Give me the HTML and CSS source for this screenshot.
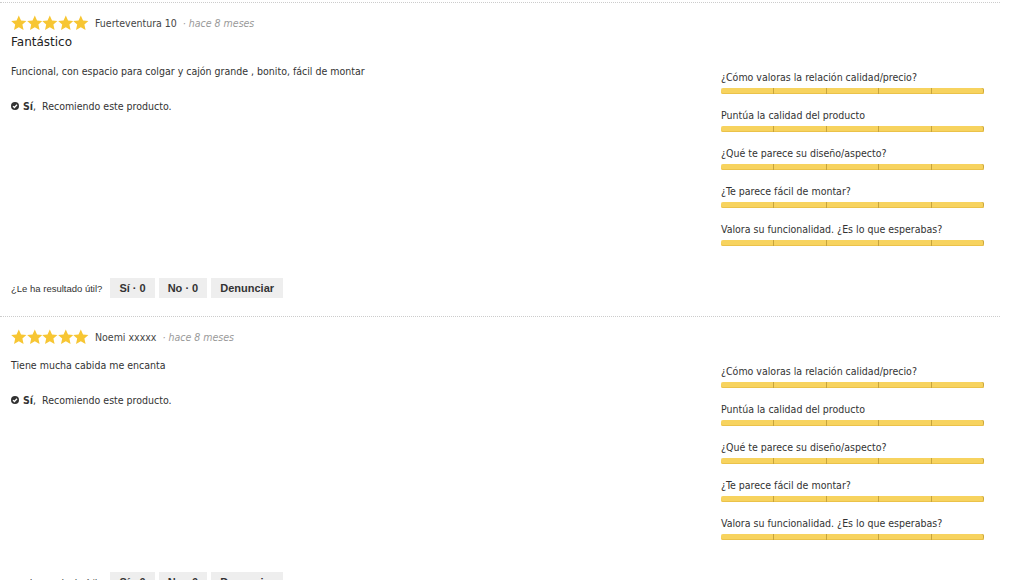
FILE: index.html
```html
<!DOCTYPE html>
<html lang="es">
  <head>
    <meta charset="utf-8" />
    <meta name="viewport" content="width=device-width, initial-scale=1" />
    <title>Opiniones del producto</title>
    <link rel="stylesheet" href="styles.css">
  </head>
  <body>
    <div class="reviews">
      <!-- review 1 -->
      <article class="review">
        <div class="review-head">
          <span class="stars" aria-label="5 estrellas">
            <svg viewBox="0 0 16 16"><polygon points="8,0.4 10.3,5.4 15.8,5.9 11.7,9.6 12.9,15.2 8,12.3 3.1,15.2 4.3,9.6 0.2,5.9 5.7,5.4"/></svg>
            <svg viewBox="0 0 16 16"><polygon points="8,0.4 10.3,5.4 15.8,5.9 11.7,9.6 12.9,15.2 8,12.3 3.1,15.2 4.3,9.6 0.2,5.9 5.7,5.4"/></svg>
            <svg viewBox="0 0 16 16"><polygon points="8,0.4 10.3,5.4 15.8,5.9 11.7,9.6 12.9,15.2 8,12.3 3.1,15.2 4.3,9.6 0.2,5.9 5.7,5.4"/></svg>
            <svg viewBox="0 0 16 16"><polygon points="8,0.4 10.3,5.4 15.8,5.9 11.7,9.6 12.9,15.2 8,12.3 3.1,15.2 4.3,9.6 0.2,5.9 5.7,5.4"/></svg>
            <svg viewBox="0 0 16 16"><polygon points="8,0.4 10.3,5.4 15.8,5.9 11.7,9.6 12.9,15.2 8,12.3 3.1,15.2 4.3,9.6 0.2,5.9 5.7,5.4"/></svg>
          </span>
          <span class="author">Fuerteventura 10</span>
          <span class="date">· hace 8 meses</span>
        </div>
        <h3 class="review-title">Fantástico</h3>

        <div class="review-body">
          <div class="review-text">
            <p>Funcional, con espacio para colgar y cajón grande , bonito, fácil de montar</p>
            <p class="recommend">
              <svg class="check" viewBox="0 0 8 8"><circle cx="4" cy="4" r="4"/><path d="M2 4.1 L3.4 5.5 L6 2.7"/></svg>
              <b>Sí</b>,&nbsp; Recomiendo este producto.
            </p>
          </div>

          <ul class="ratings">
            <li><span>¿Cómo valoras la relación calidad/precio?</span><div class="bar"><i></i><i></i><i></i><i></i><i></i></div></li>
            <li><span>Puntúa la calidad del producto</span><div class="bar"><i></i><i></i><i></i><i></i><i></i></div></li>
            <li><span>¿Qué te parece su diseño/aspecto?</span><div class="bar"><i></i><i></i><i></i><i></i><i></i></div></li>
            <li><span>¿Te parece fácil de montar?</span><div class="bar"><i></i><i></i><i></i><i></i><i></i></div></li>
            <li><span>Valora su funcionalidad. ¿Es lo que esperabas?</span><div class="bar"><i></i><i></i><i></i><i></i><i></i></div></li>
          </ul>
        </div>

        <div class="helpful">
          <span class="helpful-label">¿Le ha resultado útil?</span>
          <button class="btn">Sí · 0</button>
          <button class="btn">No · 0</button>
          <button class="btn">Denunciar</button>
        </div>
      </article>

      <!-- review 2 -->
      <article class="review">
        <div class="review-head">
          <span class="stars" aria-label="5 estrellas">
            <svg viewBox="0 0 16 16"><polygon points="8,0.4 10.3,5.4 15.8,5.9 11.7,9.6 12.9,15.2 8,12.3 3.1,15.2 4.3,9.6 0.2,5.9 5.7,5.4"/></svg>
            <svg viewBox="0 0 16 16"><polygon points="8,0.4 10.3,5.4 15.8,5.9 11.7,9.6 12.9,15.2 8,12.3 3.1,15.2 4.3,9.6 0.2,5.9 5.7,5.4"/></svg>
            <svg viewBox="0 0 16 16"><polygon points="8,0.4 10.3,5.4 15.8,5.9 11.7,9.6 12.9,15.2 8,12.3 3.1,15.2 4.3,9.6 0.2,5.9 5.7,5.4"/></svg>
            <svg viewBox="0 0 16 16"><polygon points="8,0.4 10.3,5.4 15.8,5.9 11.7,9.6 12.9,15.2 8,12.3 3.1,15.2 4.3,9.6 0.2,5.9 5.7,5.4"/></svg>
            <svg viewBox="0 0 16 16"><polygon points="8,0.4 10.3,5.4 15.8,5.9 11.7,9.6 12.9,15.2 8,12.3 3.1,15.2 4.3,9.6 0.2,5.9 5.7,5.4"/></svg>
          </span>
          <span class="author">Noemi xxxxx</span>
          <span class="date">· hace 8 meses</span>
        </div>

        <div class="review-body">
          <div class="review-text">
            <p>Tiene mucha cabida me encanta</p>
            <p class="recommend">
              <svg class="check" viewBox="0 0 8 8"><circle cx="4" cy="4" r="4"/><path d="M2 4.1 L3.4 5.5 L6 2.7"/></svg>
              <b>Sí</b>,&nbsp; Recomiendo este producto.
            </p>
          </div>

          <ul class="ratings">
            <li><span>¿Cómo valoras la relación calidad/precio?</span><div class="bar"><i></i><i></i><i></i><i></i><i></i></div></li>
            <li><span>Puntúa la calidad del producto</span><div class="bar"><i></i><i></i><i></i><i></i><i></i></div></li>
            <li><span>¿Qué te parece su diseño/aspecto?</span><div class="bar"><i></i><i></i><i></i><i></i><i></i></div></li>
            <li><span>¿Te parece fácil de montar?</span><div class="bar"><i></i><i></i><i></i><i></i><i></i></div></li>
            <li><span>Valora su funcionalidad. ¿Es lo que esperabas?</span><div class="bar"><i></i><i></i><i></i><i></i><i></i></div></li>
          </ul>
        </div>

        <div class="helpful">
          <span class="helpful-label">¿Le ha resultado útil?</span>
          <button class="btn">Sí · 0</button>
          <button class="btn">No · 0</button>
          <button class="btn">Denunciar</button>
        </div>
      </article>
    </div>
  </body>
</html>
```

FILE: styles.css
```css
:root {
  --text: #333;
  --muted: #999;
  --star: #f7c633;
  --bar: #f7d35f;
  --btn: #eee;
}

* {
  box-sizing: border-box;
}

html,
body {
  margin: 0;
  padding: 0;
  background: #fff;
}

body {
  font-family: "DejaVu Sans Condensed", "DejaVu Sans", Verdana, sans-serif;
  font-stretch: semi-condensed;
  font-size: 10.5px;
  color: var(--text);
  padding-top: 2px;
}

.reviews {
  width: 1000px;
}

.review {
  border-top: 1px dotted #ccc;
  padding: 12px 16px 18px 11px;
}

.review-head {
  display: flex;
  align-items: center;
  height: 16px;
  gap: 6px;
}
.stars {
  display: flex;
  width: 78px;
}
.stars svg {
  width: 15.6px;
  height: 16px;
  fill: var(--star);
}
.author {
  color: #444;
}
.date {
  color: var(--muted);
  font-style: italic;
}

.review-title {
  margin: 3px 0 0;
  font-family: "DejaVu Sans", Verdana, sans-serif;
  font-stretch: normal;
  font-size: 12px;
  font-weight: normal;
  line-height: 17px;
  color: #222;
}

.review-body {
  display: flex;
  justify-content: space-between;
  margin-top: 12px;
}
.review-text p {
  margin: 0;
  line-height: 16px;
}
.review-text .recommend {
  margin-top: 19px;
  display: flex;
  align-items: center;
}
.check {
  width: 8px;
  height: 8px;
  margin-right: 4px;
}
.check circle {
  fill: #333;
}
.check path {
  fill: none;
  stroke: #fff;
  stroke-width: 1.3;
}

.ratings {
  list-style: none;
  margin: 0;
  padding: 6px 0 0;
  width: 263px;
}
.ratings li {
  margin-bottom: 13px;
}
.ratings span {
  display: block;
  line-height: 16px;
}
.bar {
  display: flex;
  height: 6px;
  margin-top: 3px;
  border-radius: 2px;
  overflow: hidden;
  background: var(--bar);
  box-shadow: inset 0 -1px 0 #ebc24a, inset -1px 0 0 #c9a640;
}
.bar i {
  flex: 1;
}
.bar i + i {
  border-left: 1px solid #c7a43c;
}

.helpful {
  display: flex;
  align-items: center;
  gap: 4px;
  margin-top: 19px;
}
.helpful-label {
  font-family: "Liberation Sans", Arial, sans-serif;
  font-stretch: normal;
  font-size: 9.5px;
  margin-right: 4px;
}
.btn {
  height: 20px;
  padding: 0 9px;
  border: 0;
  background: var(--btn);
  color: #333;
  font-family: "Liberation Sans", Arial, sans-serif;
  font-size: 11px;
  font-weight: bold;
  cursor: pointer;
}
```
